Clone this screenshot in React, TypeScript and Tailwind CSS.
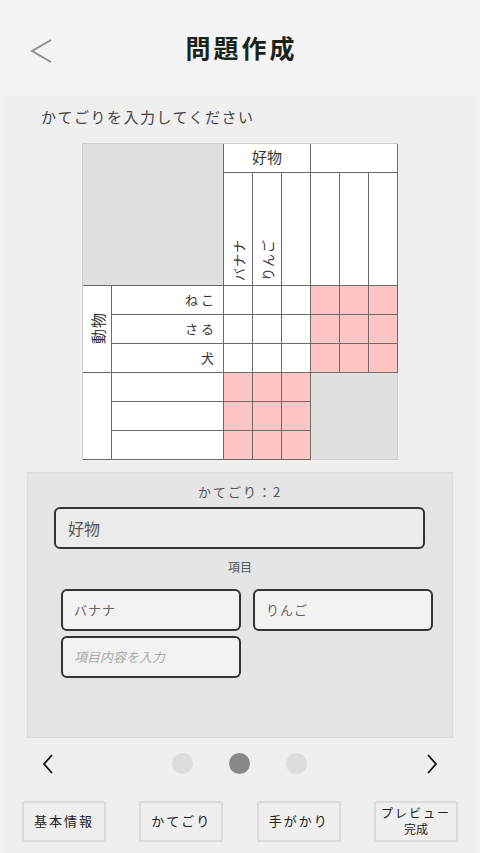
import React from 'react';

const font = { fontFamily: '"Noto Sans CJK JP", "Noto Sans", sans-serif' };

const cell = 'border-r border-b border-[#6b6b6b] bg-white';
const pink = 'border-r border-b border-[#6b6b6b] bg-[#ffc4c4]';

function VText({ children, size = 'text-[13px]' }: { children: React.ReactNode; size?: string }) {
  return (
    <span className={`[writing-mode:vertical-rl] [text-orientation:sideways] rotate-180 ${size} leading-none text-[#333] tracking-[1px]`}>
      {children}
    </span>
  );
}

export default function App() {
  const headers = ['バナナ', 'りんご', '', '', '', ''];
  const rows = ['ねこ', 'さる', '犬'];

  return (
    <div className="w-[480px] h-[853px] bg-[#f4f4f4] flex flex-col overflow-hidden" style={font}>
      {/* ヘッダー */}
      <header className="h-[96px] shrink-0 flex items-center relative">
        <svg className="absolute left-[29px] top-[38px] w-[24px] h-[26px]" viewBox="0 0 24 26" fill="none" stroke="#8a8a8a" strokeWidth={1.8}>
          <path d="M22 2L3 13l19 11" />
        </svg>
        <h1 className="w-full text-center text-[25px] font-bold text-[#1b241b] tracking-[3px] pl-[3px]">問題作成</h1>
      </header>

      <main className="flex-1 mx-[3px] bg-[#efefef] flex flex-col">
        <p className="pl-[38px] pt-[10px] text-[15px] text-[#444] tracking-[1.5px]">かてごりを入力してください</p>

        {/* 表 */}
        <div className="mt-[14px] ml-[79px] grid grid-cols-[29px_112px_repeat(6,29px)] grid-rows-[29px_113px_repeat(6,29px)] w-[316px] border-t border-l border-[#cfcfcf]">
          <div className="col-span-2 row-span-2 bg-[#e0e0e0] border-r border-b border-[#6b6b6b]" />
          <div className={`${cell} col-span-3 flex items-center justify-center text-[15px] text-[#333]`}>好物</div>
          <div className={`${cell} col-span-3`} />
          {headers.map((h, i) => (
            <div key={i} className={`${cell} flex justify-center items-end pb-[3px]`}>
              {h && <VText>{h}</VText>}
            </div>
          ))}

          <div className={`${cell} row-span-3 flex items-center justify-center`}>
            <VText size="text-[15px]">動物</VText>
          </div>
          {rows.map((r) => (
            <React.Fragment key={r}>
              <div className={`${cell} flex items-center justify-end pr-[6px] text-[13px] text-[#333] tracking-[3px]`}>{r}</div>
              <div className={cell} />
              <div className={cell} />
              <div className={cell} />
              <div className={pink} />
              <div className={pink} />
              <div className={pink} />
            </React.Fragment>
          ))}

          <div className={`${cell} row-span-3`} />
          <div className={cell} />
          <div className={pink} />
          <div className={pink} />
          <div className={pink} />
          <div className="col-span-3 row-span-3 bg-[#e0e0e0] border-r border-b border-[#cfcfcf]" />
          <div className={cell} />
          <div className={pink} />
          <div className={pink} />
          <div className={pink} />
          <div className={cell} />
          <div className={pink} />
          <div className={pink} />
          <div className={pink} />
        </div>

        {/* かてごり入力パネル */}
        <section className="mt-[12px] mx-[24px] h-[266px] bg-[#e5e5e5] border border-[#dcdcdc] flex flex-col">
          <p className="text-center text-[13px] text-[#555] pt-[10px] leading-[18px] tracking-[2px]">かてごり：2</p>
          <div className="mt-[6px] ml-[26px] mr-[27px] h-[42px] rounded-[6px] border-2 border-[#333] bg-[#ebebeb] flex items-center px-[12px] text-[16px] text-[#555]">
            好物
          </div>
          <p className="text-center text-[12px] text-[#555] mt-[9px] leading-[18px]">項目</p>
          <div className="mt-[13px] ml-[33px] mr-[19px] grid grid-cols-2 gap-x-[12px] gap-y-[5px]">
            <div className="h-[42px] rounded-[6px] border-2 border-[#333] bg-[#f2f2f2] flex items-center px-[11px] text-[13px] text-[#666] tracking-[1px]">バナナ</div>
            <div className="h-[42px] rounded-[6px] border-2 border-[#333] bg-[#f2f2f2] flex items-center px-[11px] text-[13px] text-[#666] tracking-[1px]">りんご</div>
            <div className="h-[42px] rounded-[6px] border-2 border-[#333] bg-[#f2f2f2] flex items-center px-[11px] text-[13px] text-[#aaa] italic">項目内容を入力</div>
          </div>
        </section>

        {/* ページ送り */}
        <div className="mt-[14px] h-[24px] flex items-center justify-between px-[38px]">
          <svg className="w-[14px] h-[22px]" viewBox="0 0 14 22" fill="none" stroke="#111" strokeWidth={1.8}>
            <path d="M11 2L3 11l8 9" />
          </svg>
          <div className="flex items-center gap-[36px] mr-[2px]">
            <span className="w-[21px] h-[21px] rounded-full bg-[#dcdcdc]" />
            <span className="w-[21px] h-[21px] rounded-full bg-[#888]" />
            <span className="w-[21px] h-[21px] rounded-full bg-[#dcdcdc]" />
          </div>
          <svg className="w-[14px] h-[22px]" viewBox="0 0 14 22" fill="none" stroke="#111" strokeWidth={1.8}>
            <path d="M3 2l8 9-8 9" />
          </svg>
        </div>

        {/* ナビボタン */}
        <nav className="mt-[25px] px-[19px] flex justify-between">
          {['基本情報', 'かてごり', '手がかり'].map((t) => (
            <button key={t} className="w-[84px] h-[41px] border-2 border-[#dcdcdc] bg-[#efefef] text-[13px] text-[#222] tracking-[2px] flex items-center justify-center">
              {t}
            </button>
          ))}
          <button className="w-[84px] h-[41px] border-2 border-[#dcdcdc] bg-[#efefef] text-[12px] leading-[16px] text-[#222] flex flex-col items-center justify-center">
            <span className="tracking-[2px]">プレビュー</span>
            <span>完成</span>
          </button>
        </nav>
      </main>
    </div>
  );
}
